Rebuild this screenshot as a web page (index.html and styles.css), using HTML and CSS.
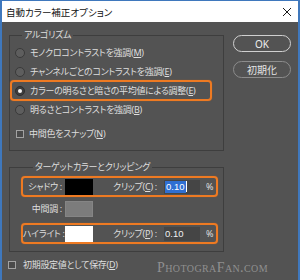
FILE: index.html
```html
<!DOCTYPE html>
<html lang="ja">
<head>
<meta charset="utf-8">
<link rel="stylesheet" href="styles.css">
</head>
<body>
<div class="window">
  <div class="titlebar">
    <span class="title">自動カラー補正オプション</span>
    <svg class="close" width="10" height="10" viewBox="0 0 10 10"><path d="M1 1 L9 9 M9 1 L1 9" stroke="#1a1a1a" stroke-width="1" fill="none"/></svg>
  </div>
  <div class="content">
    <div class="main">
      <fieldset class="group algo">
        <legend>アルゴリズム</legend>
        <div class="opt"><span class="radio"></span><span>モノクロコントラストを強調(<u>M</u>)</span></div>
        <div class="opt"><span class="radio"></span><span>チャンネルごとのコントラストを強調(<u>E</u>)</span></div>
        <div class="opt hl"><span class="radio on"></span><span>カラーの明るさと暗さの平均値による調整(<u>E</u>)</span></div>
        <div class="opt"><span class="radio"></span><span>明るさとコントラストを強調(<u>B</u>)</span></div>
        <div class="opt snap"><span class="check"></span><span>中間色をスナップ(<u>N</u>)</span></div>
      </fieldset>
      <fieldset class="group target">
        <legend>ターゲットカラーとクリッピング</legend>
        <div class="trow hl">
          <span class="tlabel">シャドウ :</span>
          <span class="swatch black"></span>
          <span class="clip">クリップ(<u>C</u>) :</span>
          <span class="field"><span class="sel">0.10</span><span class="caret"></span></span>
          <span class="pct">%</span>
        </div>
        <div class="trow mid">
          <span class="tlabel">中間調 :</span>
          <span class="swatch gray"></span>
        </div>
        <div class="trow hl high">
          <span class="tlabel">ハイライト :</span>
          <span class="swatch white"></span>
          <span class="clip">クリップ(<u>P</u>) :</span>
          <span class="field">0.10</span>
          <span class="pct">%</span>
        </div>
      </fieldset>
      <div class="opt save"><span class="check"></span><span>初期設定値として保存(<u>D</u>)</span></div>
    </div>
    <div class="buttons">
      <button class="btn ok">OK</button>
      <button class="btn reset">初期化</button>
    </div>
  </div>
  <div class="watermark">PhotograFan.com</div>
</div>
</body>
</html>
```

FILE: styles.css
```css
* { box-sizing: border-box; }
html, body { margin: 0; padding: 0; }
body {
  width: 300px;
  height: 280px;
  overflow: hidden;
  font-family: "Noto Sans", "Noto Sans CJK JP", sans-serif;
  font-feature-settings: "palt";
  font-size: 9px;
}
.window {
  position: relative;
  width: 300px;
  height: 280px;
  border: 2px solid #3f78bd;
  border-top-width: 1px;
  border-bottom: 0;
  background: #535353;
  display: flex;
  flex-direction: column;
}
.titlebar {
  height: 21px;
  flex: none;
  background: #ffffff;
  color: #111;
  display: flex;
  align-items: center;
  justify-content: space-between;
  padding: 0 6px 0 4px;
  font-size: 9.5px;
}
.close { display: block; }
.content {
  flex: 1;
  display: flex;
  color: #dedede;
  letter-spacing: -0.3px;
}
.main {
  width: 222px;
  padding-left: 7px;
}
.group {
  margin: 0;
  width: 215px;
  border: 1px solid #3e3e3e;
  padding: 0;
  min-width: 0;
}
.group legend {
  margin-left: 12px;
  padding: 0 2px;
  line-height: 12px;
}
.algo {
  margin-top: 7px;
  padding: 2px 0 7px;
}
.opt {
  height: 19px;
  display: flex;
  align-items: center;
  gap: 5px;
  padding-left: 5px;
  white-space: nowrap;
}
.opt.hl {
  height: 21px;
  width: 202px;
  margin: -1px 0;
  padding-left: 3px;
  border: 2px solid #ee7a22;
  border-radius: 4px;
  box-shadow: 0 0 1px #c8651c;
}
.opt.snap {
  margin-top: 5px;
  padding-left: 6px;
}
.radio {
  flex: none;
  width: 10px;
  height: 10px;
  border-radius: 50%;
  border: 1px solid #3a3a3a;
  background: #5e5e5e;
  display: flex;
  align-items: center;
  justify-content: center;
}
.radio.on { background: #3d3d3d; border-color: #2e2e2e; }
.radio.on::after {
  content: "";
  width: 4px;
  height: 4px;
  border-radius: 50%;
  background: #f2f2f2;
}
.check {
  flex: none;
  width: 8px;
  height: 8px;
  border: 1px solid #a2a2a2;
  background: #4a4a4a;
}
.target {
  margin-top: 10px;
  padding: 3px 0 7px 11px;
}
.trow {
  display: flex;
  align-items: center;
  width: 197px;
  height: 21px;
  border: 2px solid transparent;
  border-radius: 4px;
  white-space: nowrap;
}
.trow.hl { border-color: #ee7a22; box-shadow: 0 0 1px #c8651c; }
.trow.mid { margin-top: 1px; }
.trow.high { margin-top: 4px; }
.tlabel {
  width: 42px;
  text-align: right;
  padding-right: 3px;
}
.swatch {
  flex: none;
  width: 28px;
  height: 16px;
}
.swatch.black { background: #000; }
.swatch.gray { background: #7c7c7c; border: 1px solid #858585; }
.swatch.white { background: #fff; }
.clip {
  width: 51px;
  margin-left: 20px;
}
.field {
  width: 36px;
  height: 14px;
  background: #454545;
  color: #f0f0f0;
  font-family: "Liberation Sans", sans-serif;
  font-size: 9.5px;
  letter-spacing: 0;
  line-height: 14px;
  padding-left: 1px;
  display: flex;
  align-items: center;
}
.sel {
  background: #2f6fd2;
  color: #fff;
  padding: 0 1px;
  line-height: 12px;
}
.caret {
  width: 1px;
  height: 11px;
  background: #fff;
}
.pct {
  margin-left: 6px;
}
.opt.save {
  margin-top: 3px;
  margin-left: -1px;
  gap: 7px;
  padding-left: 0;
}
.buttons {
  margin-left: 9px;
  padding-top: 13px;
  display: flex;
  flex-direction: column;
  gap: 9px;
}
.btn {
  width: 58px;
  height: 17px;
  padding: 0;
  border-radius: 9px;
  border: 1.5px solid #d0d0d0;
  background: transparent;
  color: #eeeeee;
  font-family: "Noto Sans", "Noto Sans CJK JP", sans-serif;
  font-feature-settings: "palt";
  font-size: 10px;
  line-height: 14px;
}
.btn.reset { border-color: #8c8c8c; color: #e4e4e4; }
.watermark {
  position: absolute;
  left: 155px;
  top: 259px;
  font-family: "Liberation Serif", serif;
  font-variant: small-caps;
  font-size: 14px;
  letter-spacing: 0.4px;
  color: rgba(205, 205, 205, 0.5);
}
```
